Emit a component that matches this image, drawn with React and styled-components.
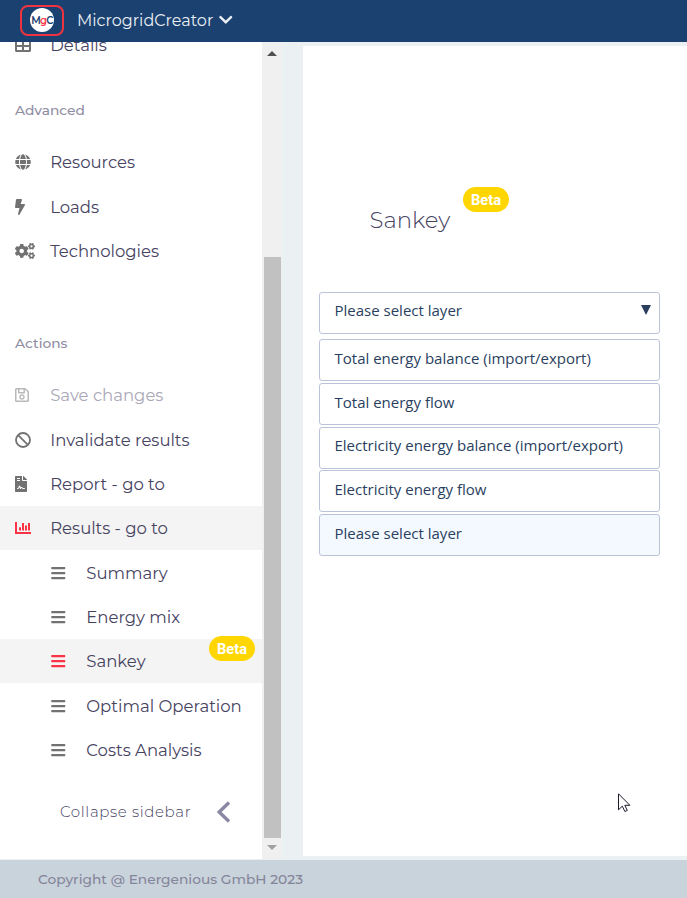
import React from "react";
import styled, { createGlobalStyle } from "styled-components";
import {
  FaTable, FaGlobe, FaBolt, FaCogs, FaRegSave, FaFileContract,
  FaBars, FaChevronDown,
} from "react-icons/fa";

const GlobalStyle = createGlobalStyle`
  * { box-sizing: border-box; }
  html, body { margin: 0; padding: 0; overflow: hidden; }
  body { font-family: Montserrat, Inter, "Open Sans", sans-serif; color: #46435f; background: #ebf0f3; }
`;

const Page = styled.div`
  width: 687px;
  height: 898px;
  display: flex;
  flex-direction: column;
  overflow: hidden;
  position: relative;
`;

const Header = styled.header`
  height: 42px;
  flex: none;
  display: flex;
  align-items: center;
  padding: 0 0 2px 20px;
  background: #1a416f;
  color: #e9eef4;
`;

const LogoFrame = styled.div`
  width: 44px;
  height: 31px;
  display: flex;
  align-items: center;
  justify-content: center;
  border: 2px solid #ef3340;
  border-radius: 8px;
`;

const LogoDisc = styled.div`
  width: 24px;
  height: 24px;
  border-radius: 50%;
  background: #fff;
  display: flex;
  align-items: center;
  justify-content: center;
  font-size: 10px;
  font-weight: 600;
  letter-spacing: -0.7px;
  color: #1a416f;
`;

const LogoAccent = styled.span`
  color: #ff3344;
`;

const Brand = styled.span`
  margin-left: 13px;
  width: 141px;
  font-size: 16px;
  font-weight: 400;
  white-space: nowrap;
`;

const Body = styled.div`
  height: 818px;
  flex: none;
  display: flex;
`;

const Sidebar = styled.nav`
  width: 262px;
  height: 817px;
  background: #fff;
  overflow: hidden;
`;

const SidebarContent = styled.div`
  margin-top: -19.35px;
`;

const Heading = styled.div`
  height: 60px;
  margin-top: ${(p) => p.$gap}px;
  padding-left: 15px;
  display: flex;
  align-items: center;
  font-size: 13.75px;
  font-weight: 500;
  color: #8f8da3;
`;

const Row = styled.div`
  height: 44.35px;
  display: flex;
  align-items: center;
  position: relative;
  padding-left: ${(p) => (p.$nested ? 51.1 : 15)}px;
  background: ${(p) => (p.$active ? "#f4f4f4" : "#fff")};
  color: ${(p) => (p.$disabled ? "#aaa8b7" : "#46435f")};
  font-size: 16.5px;
  font-weight: 400;
  white-space: nowrap;
`;

const IconSlot = styled.span`
  width: 35.2px;
  display: flex;
  color: ${(p) => (p.$active ? "#fb3445" : p.$disabled ? "#b9b9b9" : "#727272")};
  svg { flex: none; height: 16px; width: ${(p) => p.$width}px; }
`;

const Badge = styled.span`
  width: 46px;
  height: 25px;
  border-radius: 13px;
  display: flex;
  align-items: center;
  justify-content: center;
  background: #ffd600;
  color: #fff;
  font: 700 14.7px Roboto, sans-serif;
`;

const RowBadge = styled(Badge)`
  position: absolute;
  right: 7px;
  top: -3px;
`;

const Collapse = styled.div`
  height: 40px;
  margin-top: 19.5px;
  padding-left: 60px;
  display: flex;
  align-items: center;
  font-size: 15px;
  font-weight: 300;
  letter-spacing: 0.63px;
  white-space: nowrap;
`;

const CollapseLabel = styled.span`
  width: 156px;
`;

const Scrollbar = styled.div`
  width: 20px;
  height: 817px;
  display: flex;
  flex-direction: column;
  align-items: center;
  justify-content: space-between;
  padding: 9px 0;
  background: #f0f0f0;
`;

const Arrow = styled.span`
  width: 0;
  height: 0;
  border: 5px solid transparent;
  border-top-width: ${(p) => (p.$up ? 0 : 5)}px;
  border-bottom-width: ${(p) => (p.$up ? 5 : 0)}px;
  border-top-color: ${(p) => (p.$up ? "transparent" : "#a0a0a0")};
  border-bottom-color: ${(p) => (p.$up ? "#505050" : "transparent")};
`;

const Thumb = styled.div`
  width: 17px;
  height: 581px;
  margin: 194px 0 0 1px;
  background: #c1c1c1;
`;

const Main = styled.main`
  flex: 1;
  height: 810px;
  margin: 4px 0 0 21px;
  background: #fff;
  padding: 141px 0 0 16px;
`;

const TitleLine = styled.div`
  display: flex;
  height: 104.6px;
  padding-left: 50.5px;
`;

const Title = styled.h1`
  margin: 19px 0 0;
  width: 93.5px;
  font-size: 22.8px;
  line-height: 28px;
  font-weight: 300;
`;

const Select = styled.div`
  width: 341px;
  height: 42px;
  display: flex;
  justify-content: space-between;
  padding: 7.7px 8.5px 0 14.5px;
  border: 1px solid #bac4d9;
  border-radius: 3px;
  background: ${(p) => (p.$selected ? "#f4f9ff" : "#fff")};
  color: #2a3f5f;
  font: 15px/20px "Open Sans", sans-serif;
`;

const Options = styled.div`
  display: flex;
  flex-direction: column;
  gap: 1.75px;
  margin-top: 5.6px;
`;

const SelectArrow = styled.svg`
  width: 10px;
  height: 10px;
  margin-top: 4.3px;
`;

const Footer = styled.footer`
  flex: 1;
  display: flex;
  align-items: center;
  padding-left: 38px;
  background: #c9d3dc;
  color: #85859a;
  font-size: 13.75px;
  font-weight: 500;
`;

const Pointer = styled.svg`
  position: absolute;
  left: 618px;
  top: 793px;
  width: 13px;
  height: 20px;
`;

function BanIcon() {
  return (
    <svg viewBox="0 0 16 16" fill="none" stroke="currentColor" strokeWidth="1.8">
      <circle cx="8" cy="8" r="7" />
      <path d="M3.1 3.1l9.8 9.8" />
    </svg>
  );
}

function ChartIcon() {
  return (
    <svg viewBox="0 0 16 16" fill="currentColor">
      <path d="M0 2h2v10h14v2H0zM4 7.2h2V10.600H4zM7 3h2v7.600H7zM10 5.500h2v5.100h-2zM13 3h2v7.600h-2z" />
    </svg>
  );
}

const advanced = [
  { label: "Resources", icon: FaGlobe },
  { label: "Loads", icon: FaBolt, iconWidth: 10 },
  { label: "Technologies", icon: FaCogs, iconWidth: 20 },
];

const actions = [
  { label: "Save changes", icon: FaRegSave, iconWidth: 14, disabled: true },
  { label: "Invalidate results", icon: BanIcon },
  { label: "Report - go to", icon: FaFileContract, iconWidth: 12 },
  { label: "Results - go to", icon: ChartIcon, active: true },
  { label: "Summary", icon: FaBars, iconWidth: 14.5, nested: true },
  { label: "Energy mix", icon: FaBars, iconWidth: 14.5, nested: true },
  { label: "Sankey", icon: FaBars, iconWidth: 14.5, nested: true, active: true, beta: true },
  { label: "Optimal Operation", icon: FaBars, iconWidth: 14.5, nested: true },
  { label: "Costs Analysis", icon: FaBars, iconWidth: 14.5, nested: true },
];

const options = [
  "Total energy balance (import/export)",
  "Total energy flow",
  "Electricity energy balance (import/export)",
  "Electricity energy flow",
  "Please select layer",
];

function MenuItem({ label, icon: Icon, iconWidth = 16, nested, active, disabled, beta }) {
  return (
    <Row $nested={nested} $active={active} $disabled={disabled}>
      <IconSlot $width={iconWidth} $active={active} $disabled={disabled}><Icon /></IconSlot>
      <span>{label}</span>
      {beta && <RowBadge>Beta</RowBadge>}
    </Row>
  );
}

export default function App() {
  return (
    <Page>
      <GlobalStyle />
      <Header>
        <LogoFrame>
          <LogoDisc>M<LogoAccent>g</LogoAccent>C</LogoDisc>
        </LogoFrame>
        <Brand>MicrogridCreator</Brand>
        <FaChevronDown size={15.5} />
      </Header>
      <Body>
        <Sidebar>
          <SidebarContent>
            <MenuItem label="Details" icon={FaTable} />
            <Heading $gap={13}>Advanced</Heading>
            {advanced.map((item) => <MenuItem key={item.label} {...item} />)}
            <Heading $gap={40}>Actions</Heading>
            {actions.map((item) => <MenuItem key={item.label} {...item} />)}
            <Collapse>
              <CollapseLabel>Collapse sidebar</CollapseLabel>
              <svg width="15" height="22" viewBox="0 0 15 22" fill="none" stroke="#8a88a0" strokeWidth="3.4">
                <path d="M13 1.5 3.2 11 13 20.5" />
              </svg>
            </Collapse>
          </SidebarContent>
        </Sidebar>
        <Scrollbar>
          <Arrow $up />
          <Thumb />
          <Arrow />
        </Scrollbar>
        <Main>
          <TitleLine>
            <Title>Sankey</Title>
            <Badge>Beta</Badge>
          </TitleLine>
          <Select>
            Please select layer
            <SelectArrow viewBox="0 0 10 10"><path d="M0 0h10L5 10z" fill="#2a3f5f" /></SelectArrow>
          </Select>
          <Options>
            {options.map((text) => (
              <Select key={text} $selected={text === "Please select layer"}>{text}</Select>
            ))}
          </Options>
        </Main>
      </Body>
      <Footer>Copyright @ Energenious GmbH 2023</Footer>
      <Pointer viewBox="0 0 13 20">
        <path d="M.5.8v16l3.8-3.6 2.6 5.3 2.4-1.1-2.5-5.1h5.1z" fill="#fff" stroke="#1c1a2b" />
      </Pointer>
    </Page>
  );
}
